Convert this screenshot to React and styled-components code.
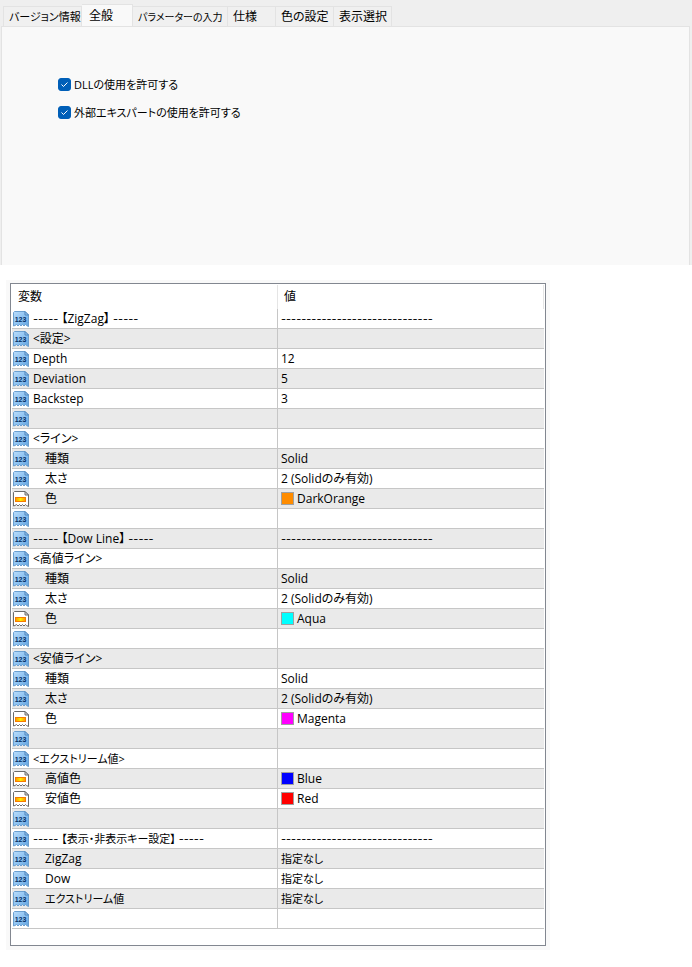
import React, { useState } from "react";
import styled, { createGlobalStyle } from "styled-components";

const GlobalStyle = createGlobalStyle`
  * {
    box-sizing: border-box;
  }

  body {
    margin: 0;
    background: #ffffff;
    color: #000000;
    font-family: "Open Sans", "Noto Sans CJK JP", sans-serif;
    font-size: 12px;
    line-height: 16px;
    font-feature-settings: "palt";
  }
`;

const Dialog = styled.section`
  display: flex;
  flex-direction: column;
  min-height: 265px;
  padding: 4px 2px 0 1px;
  background: #efefef;
`;

const TabList = styled.div`
  display: flex;
  align-items: flex-end;
  padding-left: 2px;
`;

const Tab = styled.button`
  flex: 0 1 ${props => props.$width}px;
  min-width: 0;
  height: ${props => (props.$active ? 23 : 20)}px;
  margin-bottom: ${props => (props.$active ? -1 : 0)}px;
  padding: 0 0 ${props => (props.$active ? 1 : 0)}px
    ${props => (props.$active ? 7 : 5)}px;
  border: 1px solid #e3e3e3;
  border-width: 1px 1px 0 0;
  background: ${props => (props.$active ? "#f9f9f9" : "#f0f0f0")};
  color: inherit;
  font: inherit;
  font-size: ${props => props.$size || 12}px;
  font-feature-settings: inherit;
  text-align: left;
  white-space: nowrap;

  &:first-child {
    border-left-width: 1px;
  }
`;

const TabPanel = styled.div`
  display: flex;
  flex: 1;
  flex-direction: column;
  gap: 12px;
  padding: 50px 56px;
  border: 1px solid #e3e3e3;
  border-bottom: 0;
  background: #f9f9f9;
`;

const CheckLabel = styled.label`
  display: flex;
  align-items: center;
  gap: 3px;
  font-size: 11px;
`;

const CheckBox = styled.span`
  display: grid;
  width: 13px;
  height: 14px;

  input,
  svg {
    grid-area: 1 / 1;
    width: 13px;
    height: 13px;
    margin: 0;
  }

  input {
    appearance: none;
    border: 1px solid #868686;
    border-radius: 3px;
    background: #ffffff;
  }

  input:checked {
    border-color: #005fb8;
    background: #005fb8;
  }

  svg {
    pointer-events: none;
  }
`;

const Sheet = styled.section`
  max-width: 544px;
  margin: 15px 6px 17px;
  padding: 3px 4px 4px;
  background: #f9f9f9;
`;

const Frame = styled.div`
  padding: 1px 1px 16px;
  border: 1px solid #828790;
  background: #ffffff;
`;

const Table = styled.table`
  width: 100%;
  border-collapse: separate;
  border-spacing: 0;
  table-layout: fixed;
`;

const HeadCell = styled.th`
  width: 50%;
  height: 24px;
  padding: 0 6px;
  border-right: 1px solid #e5e5e5;
  font-weight: normal;
  text-align: left;
`;

const Row = styled.tr`
  &:nth-child(even) {
    background: #eaeaea;
  }
`;

const Cell = styled.td`
  height: 20px;
  padding: 0 1px;
  border-bottom: 1px solid #c6c6c6;
  white-space: nowrap;

  & + & {
    padding: 0 3px;
  }

  &:first-child {
    border-right: 1px solid #c6c6c6;
  }
`;

const CellContent = styled.div`
  display: flex;
  align-items: center;
  gap: ${props => props.$gap}px;
  height: 19px;
  font-size: ${props => (props.$small ? 11 : 12)}px;
`;

const Name = styled.span`
  padding-left: ${props => (props.$indent ? 12 : 0)}px;
`;

const Dashes = styled.span`
  font-family: Inter, sans-serif;
  font-size: 11px;
`;

const Swatch = styled.span`
  width: 13px;
  height: 13px;
  border: 1px solid #a0a0a0;
  background: ${props => props.$color};
`;

const IconSvg = styled.svg`
  flex: none;
  width: 16px;
  height: 16px;
  margin-top: 1px;
`;

const PAPER =
  "M1.5 .5H12L15.5 4V15.5L13.5 14.5L12.5 13.5L11 15L9.5 13.5L8 15L6.5 13.5L5 15L3.5 13.5L2 14.5L.5 15V1.5Z";

const NumberIcon = () => (
  <IconSvg viewBox="0 0 16 16" aria-hidden="true">
    <defs>
      <linearGradient id="number-paper" x1="0" y1="0" x2="1" y2="1">
        <stop offset="0" stopColor="#b9dcfb" />
        <stop offset="0.5" stopColor="#8fc3f2" />
        <stop offset="1" stopColor="#62a3de" />
      </linearGradient>
    </defs>
    <path d={PAPER} fill="url(#number-paper)" stroke="#6a9fd0" />
    <path d="M12 .5V4H15.5Z" fill="#a5d0f5" stroke="#4c84bb" />
    <text
      x="7.5"
      y="10.5"
      fill="#062f62"
      fontFamily="Liberation Sans Narrow, Liberation Sans, sans-serif"
      fontSize="7"
      fontWeight="700"
      textAnchor="middle"
    >
      123
    </text>
  </IconSvg>
);

const ColorIcon = () => (
  <IconSvg viewBox="0 0 16 16" aria-hidden="true">
    <defs>
      <linearGradient id="color-bar">
        <stop offset="0" stopColor="#ff9500" />
        <stop offset="0.5" stopColor="#ffee00" />
        <stop offset="1" stopColor="#ff9500" />
      </linearGradient>
    </defs>
    <path d={PAPER} fill="#ffffff" stroke="#6b6b6b" />
    <path d="M12 .5V4H15.5Z" fill="#dddddd" stroke="#6b6b6b" />
    <rect
      x="2.5"
      y="6.5"
      width="10"
      height="4"
      fill="url(#color-bar)"
      stroke="#f57c00"
    />
  </IconSvg>
);

const tabs = [
  { label: "バージョン情報", width: 79, size: 11 },
  { label: "全般", width: 51 },
  { label: "パラメーターの入力", width: 95, size: 10 },
  { label: "仕様", width: 48 },
  { label: "色の設定", width: 58 },
  { label: "表示選択", width: 58 }
];

const LINE = "------------------------------";

const rows = [
  { title: "【ZigZag】", value: LINE },
  { name: "<設定>" },
  { name: "Depth", value: "12" },
  { name: "Deviation", value: "5" },
  { name: "Backstep", value: "3" },
  {},
  { name: "<ライン>" },
  { name: "種類", indent: true, value: "Solid" },
  { name: "太さ", indent: true, value: "2 (Solidのみ有効)" },
  { name: "色", indent: true, value: "DarkOrange", color: "#ff8c00" },
  {},
  { title: "【Dow Line】", value: LINE },
  { name: "<高値ライン>" },
  { name: "種類", indent: true, value: "Solid" },
  { name: "太さ", indent: true, value: "2 (Solidのみ有効)" },
  { name: "色", indent: true, value: "Aqua", color: "#00ffff" },
  {},
  { name: "<安値ライン>" },
  { name: "種類", indent: true, value: "Solid" },
  { name: "太さ", indent: true, value: "2 (Solidのみ有効)" },
  { name: "色", indent: true, value: "Magenta", color: "#ff00ff" },
  {},
  { name: "<エクストリーム値>", small: true },
  { name: "高値色", indent: true, value: "Blue", color: "#0000ff" },
  { name: "安値色", indent: true, value: "Red", color: "#ff0000" },
  {},
  { title: "【表示・非表示キー設定】", value: LINE, small: true },
  { name: "ZigZag", indent: true, value: "指定なし" },
  { name: "Dow", indent: true, value: "指定なし" },
  { name: "エクストリーム値", indent: true, value: "指定なし", small: true },
  {}
];

const Option = ({ id, children }) => (
  <CheckLabel htmlFor={id}>
    <CheckBox>
      <input type="checkbox" id={id} defaultChecked />
      <svg viewBox="0 0 13 13" fill="none" stroke="#ffffff" aria-hidden="true">
        <path d="M3.5 6.5L5.5 8.5L9.5 4.5" />
      </svg>
    </CheckBox>
    {children}
  </CheckLabel>
);

const ParameterRow = ({ title, name, indent, value, color, small }) => (
  <Row>
    <Cell>
      <CellContent $gap={4} $small={small}>
        {color ? <ColorIcon /> : <NumberIcon />}
        {title ? (
          <Name>
            <Dashes>-----</Dashes> {title} <Dashes>-----</Dashes>
          </Name>
        ) : (
          <Name $indent={indent}>{name}</Name>
        )}
      </CellContent>
    </Cell>
    <Cell>
      <CellContent $gap={3} $small={value === "指定なし"}>
        {color && <Swatch $color={color} />}
        {value === LINE ? <Dashes>{value}</Dashes> : value}
      </CellContent>
    </Cell>
  </Row>
);

const App = () => {
  const [active, setActive] = useState(1);

  return (
    <>
      <GlobalStyle />
      <Dialog>
        <TabList role="tablist">
          {tabs.map((tab, index) => (
            <Tab
              key={tab.label}
              type="button"
              role="tab"
              aria-selected={index === active}
              $active={index === active}
              $width={tab.width}
              $size={tab.size}
              onClick={() => setActive(index)}
            >
              {tab.label}
            </Tab>
          ))}
        </TabList>
        <TabPanel role="tabpanel">
          <Option id="allow-dll">DLLの使用を許可する</Option>
          <Option id="allow-expert">外部エキスパートの使用を許可する</Option>
        </TabPanel>
      </Dialog>
      <Sheet>
        <Frame>
          <Table>
            <thead>
              <tr>
                <HeadCell scope="col">変数</HeadCell>
                <HeadCell scope="col">値</HeadCell>
              </tr>
            </thead>
            <tbody>
              {rows.map((row, index) => (
                <ParameterRow key={index} {...row} />
              ))}
            </tbody>
          </Table>
        </Frame>
      </Sheet>
    </>
  );
};

export default App;
